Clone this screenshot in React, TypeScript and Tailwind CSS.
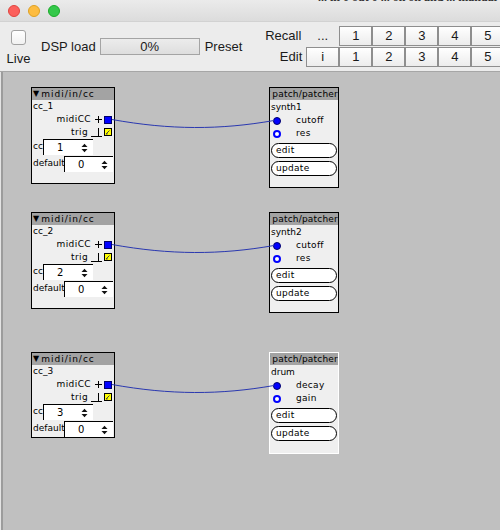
const ui = "font-['Liberation_Sans',Arial,sans-serif] text-[13px] text-[#1a1a1a]";
const nodeText = "font-['DejaVu_Sans',sans-serif] text-[9px] leading-none text-black";

const Arrows = () => (
  <svg width="7" height="10" viewBox="0 0 7 10">
    <polygon points="0.5,4 3.5,0.8 6.5,4" fill="#111" />
    <polygon points="0.5,6 3.5,9.2 6.5,6" fill="#111" />
  </svg>
);

const Spin = ({ value, wide }: { value: string; wide: string }) => (
  <div className={`${wide} flex h-[16px] items-center border-l border-t border-black bg-white`}>
    <span className="pl-[13px] text-[10px]">{value}</span>
    <span className="ml-auto mr-[5px] flex">
      <Arrows />
    </span>
  </div>
);

const MidiNode = ({ pos, name, cc, tall }: { pos: string; name: string; cc: string; tall: boolean }) => (
  <div className={`absolute left-[28px] ${pos} flex w-[84px] flex-col border border-black bg-[#efefef] ${nodeText}`}>
    <div className="flex h-[12px] items-center bg-[#a3a3a3] pl-[1px] tracking-[1px]">
      <span className="mr-[1px] text-[8px]">▼</span>midi/in/cc
    </div>
    <div className="flex h-[13px] items-center pl-[1px]">{name}</div>
    <div className="flex h-[13px] items-center justify-end pr-[2px] tracking-[0.4px]">
      midiCC
      <svg width="7" height="7" viewBox="0 0 7 7" className="ml-[4px]">
        <path d="M0 3.5H7M3.5 0V7" stroke="#000" strokeWidth="1" />
      </svg>
      <span className="ml-[2px] h-[8px] w-[8px] border border-[#00006a] bg-[#0000ff]" />
    </div>
    <div className="flex h-[12px] items-center justify-end pr-[2px] tracking-[0.4px]">
      trig
      <svg width="12" height="10" viewBox="0 0 12 10" className="ml-[3px]">
        <path d="M0 9.5H11M7.5 1V9.5" stroke="#000" strokeWidth="1" />
      </svg>
      <svg width="8" height="8" viewBox="0 0 8 8" className="ml-[1px]">
        <rect x="0.5" y="0.5" width="7" height="7" fill="#ffff00" stroke="#000" />
        <path d="M2.5 5.5L5.5 2.5" stroke="#444" strokeWidth="1" />
        <rect x="2" y="5" width="1.5" height="1.5" fill="#444" />
      </svg>
    </div>
    <div className="flex h-[17px] items-end pl-[1px]">
      <span className="w-[10px] pb-[4px]">cc</span>
      <Spin value={cc} wide="w-[50px]" />
    </div>
    <div className={`flex h-[17px] items-end pl-[1px] ${tall ? "mb-[11px]" : "mb-0"}`}>
      <span className="w-[31px] pb-[4px]">default</span>
      <Spin value="0" wide="w-[49px]" />
    </div>
  </div>
);

const Port = ({ filled, label }: { filled: boolean; label: string }) => (
  <div className="flex h-[13px] items-center pl-[3px]">
    {filled ? (
      <span className="h-[8px] w-[8px] rounded-full border border-[#00006a] bg-[#0000ff]" />
    ) : (
      <span className="h-[8px] w-[8px] rounded-full border-2 border-[#0000ff] bg-white" />
    )}
    <span className="ml-[15px] tracking-[0.3px]">{label}</span>
  </div>
);

const PatchNode = ({ pos, name, a, b, selected }: { pos: string; name: string; a: string; b: string; selected: boolean }) => (
  <div
    className={`absolute left-[266px] ${pos} flex w-[70px] flex-col border bg-[#efefef] ${
      selected ? "border-white pb-[12px]" : "border-black pb-[11px]"
    } ${nodeText}`}
  >
    <div className="flex h-[12px] items-center justify-end overflow-hidden whitespace-nowrap bg-[#a3a3a3] tracking-[0.2px]">
      <span className="text-[8px]">▼</span>
      <span className="ml-[2px]">patch/patcher</span>
    </div>
    <div className="flex h-[14px] items-center pl-[1px]">{name}</div>
    <Port filled label={a} />
    <Port filled={false} label={b} />
    <div className="mx-[1px] mt-[3px] flex h-[15px] items-center rounded-full border border-black bg-white pl-[4px] tracking-[0.3px]">
      edit
    </div>
    <div className="mx-[1px] mt-[3px] flex h-[15px] items-center rounded-full border border-black bg-white pl-[4px] tracking-[0.3px]">
      update
    </div>
  </div>
);

const Cell = ({ label, plain }: { label: string; plain?: boolean }) => (
  <div
    className={`flex h-[20px] w-[33px] shrink-0 items-center justify-center ${
      plain ? "" : "border border-[#8e8e8e] bg-gradient-to-b from-white to-[#ececec]"
    }`}
  >
    {label}
  </div>
);

export default function App() {
  const nums = ["1", "2", "3", "4", "5"];
  return (
    <div className={`flex h-[530px] w-[500px] flex-col overflow-hidden bg-[#c0c0c0] ${ui}`}>
      {/* title bar */}
      <div className="relative flex h-[22px] shrink-0 items-center gap-[8px] overflow-hidden border-b border-[#d2d2d2] bg-gradient-to-b from-[#ebebeb] to-[#dcdcdc] pl-[8px]">
        <span className="absolute left-[318px] top-[-12px] whitespace-nowrap font-['Liberation_Serif',serif] text-[12px] font-bold text-[#333]">
          ... in 0 out 0 ... on on and ... manual ... on 0 ... what manner
        </span>
        <span className="h-[12px] w-[12px] rounded-full border border-[#e0443e] bg-[#fc605c]" />
        <span className="h-[12px] w-[12px] rounded-full border border-[#dea123] bg-[#fdbc40]" />
        <span className="h-[12px] w-[12px] rounded-full border border-[#1aab29] bg-[#34c84a]" />
      </div>

      {/* toolbar */}
      <div className="flex h-[50px] shrink-0 overflow-hidden border-b border-[#a6a6a6] bg-[#ececec]">
        <div className="ml-[6px] mt-[8px] flex w-[25px] shrink-0 flex-col items-center">
          <div className="h-[15px] w-[15px] rounded-[3px] border border-[#a2a2a2] bg-gradient-to-b from-white to-[#f1f1f1]" />
          <span className="mt-[6px] leading-[15px]">Live</span>
        </div>
        <div className="ml-[10px] mt-[16px] flex h-[17px] shrink-0 items-center">
          <span>DSP load</span>
          <div className="ml-[4px] flex h-[17px] w-[100px] items-center justify-center border border-[#a4a4a4] bg-gradient-to-b from-[#ececec] to-[#dedede]">
            0%
          </div>
          <span className="ml-[5px]">Preset</span>
        </div>
        <div className="ml-[19px] mt-[4px] flex shrink-0 flex-col gap-[1px]">
          <div className="flex items-center">
            <span className="w-[41px] pr-[1px] text-right">Recall</span>
            <span className="w-[4px]" />
            <Cell label="..." plain />
            {nums.map((n) => (
              <Cell key={n} label={n} />
            ))}
          </div>
          <div className="flex items-center">
            <span className="w-[41px] text-right">Edit</span>
            <span className="w-[4px]" />
            <Cell label="i" />
            {nums.map((n) => (
              <Cell key={n} label={n} />
            ))}
          </div>
        </div>
      </div>

      {/* canvas */}
      <div className="flex flex-1 bg-[#e4e4e4] pl-[1px]">
        <div className="relative flex-1 border-l-2 border-[#9c9c9c] bg-[#c0c0c0]">
          <MidiNode pos="top-[15px]" name="cc_1" cc="1" tall />
          <MidiNode pos="top-[140px]" name="cc_2" cc="2" tall />
          <MidiNode pos="top-[280px]" name="cc_3" cc="3" tall={false} />

          <PatchNode pos="top-[15px]" name="synth1" a="cutoff" b="res" selected={false} />
          <PatchNode pos="top-[140px]" name="synth2" a="cutoff" b="res" selected={false} />
          <PatchNode pos="top-[280px]" name="drum" a="decay" b="gain" selected />

          <svg className="pointer-events-none absolute left-[-3px] top-0" width="500" height="460">
            <path d="M112 47.5 C 170 58, 220 58, 274 48.5" stroke="#2a38b0" strokeWidth="1" fill="none" />
            <path d="M112 172.5 C 170 183, 220 183, 274 173.5" stroke="#2a38b0" strokeWidth="1" fill="none" />
            <path d="M112 312.5 C 170 323, 220 323, 274 313.5" stroke="#2a38b0" strokeWidth="1" fill="none" />
          </svg>
        </div>
      </div>
    </div>
  );
}
